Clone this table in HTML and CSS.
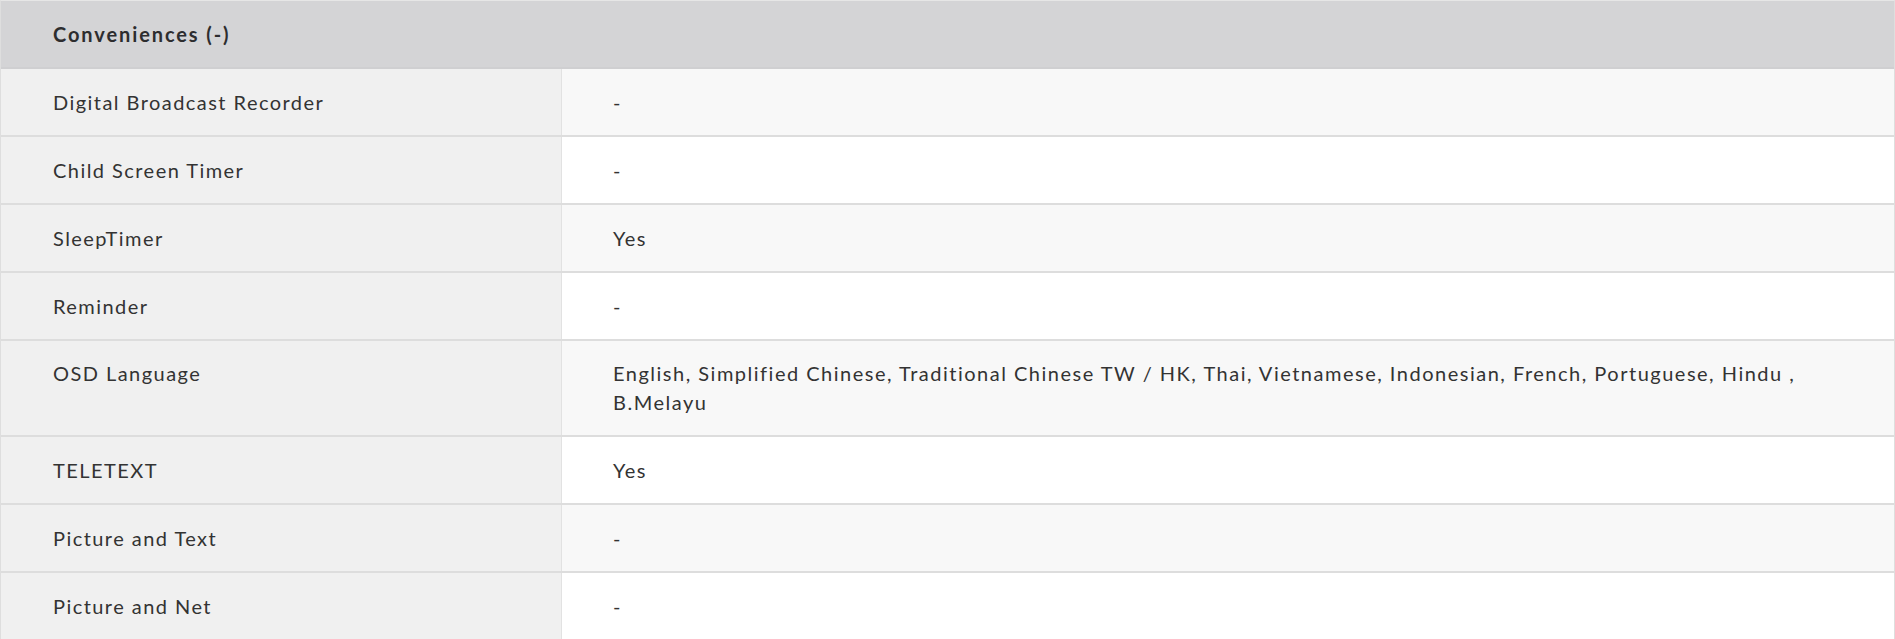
FILE: index.html
```html
<!DOCTYPE html>
<html lang="en">
<head>
<meta charset="utf-8">
<title>Conveniences</title>
<link rel="stylesheet" href="styles.css">
</head>
<body>
<div class="spec">
  <div class="spec-head">Conveniences (-)</div>
  <div class="spec-row odd"><div class="k">Digital Broadcast Recorder</div><div class="v">-</div></div>
  <div class="spec-row even"><div class="k">Child Screen Timer</div><div class="v">-</div></div>
  <div class="spec-row odd"><div class="k">SleepTimer</div><div class="v">Yes</div></div>
  <div class="spec-row even"><div class="k">Reminder</div><div class="v">-</div></div>
  <div class="spec-row odd multi"><div class="k">OSD Language</div><div class="v">English, Simplified Chinese, Traditional Chinese TW / HK, Thai, Vietnamese, Indonesian, French, Portuguese, Hindu , B.Melayu</div></div>
  <div class="spec-row even"><div class="k">TELETEXT</div><div class="v">Yes</div></div>
  <div class="spec-row odd"><div class="k">Picture and Text</div><div class="v">-</div></div>
  <div class="spec-row even"><div class="k">Picture and Net</div><div class="v">-</div></div>
</div>
</body>
</html>
```
FILE: styles.css
```css
html, body {
  margin: 0;
  padding: 0;
  background: #ffffff;
}
body {
  font-family: "Lato", "Liberation Sans", sans-serif;
  color: #333333;
}
.spec {
  width: 1895px;
  box-sizing: border-box;
  border-left: 1px solid #dedede;
  border-right: 1px solid #dedede;
  border-top: 1px solid #e6e6e6;
}
.spec-head {
  height: 68px;
  box-sizing: border-box;
  background: #d4d4d6;
  border-bottom: 2px solid #cfcfd1;
  padding-left: 52px;
  display: flex;
  align-items: center;
  font-weight: 700;
  font-size: 20px;
  letter-spacing: 1.9px;
  color: #2d2d2f;
}
.spec-row {
  display: grid;
  grid-template-columns: 561px 1fr;
  border-bottom: 2px solid #dddddd;
}
.k {
  background: #f0f0f0;
  border-right: 1px solid #e2e2e2;
  padding: 18px 20px 18px 52px;
  font-size: 20px;
  line-height: 30px;
  letter-spacing: 1.45px;
}
.v {
  padding: 18px 80px 18px 51px;
  font-size: 20px;
  line-height: 30px;
  letter-spacing: 1.5px;
}
.multi .k,
.multi .v {
  line-height: 29px;
}
.odd .v { background: #f8f8f8; }
.even .v { background: #ffffff; }
```
